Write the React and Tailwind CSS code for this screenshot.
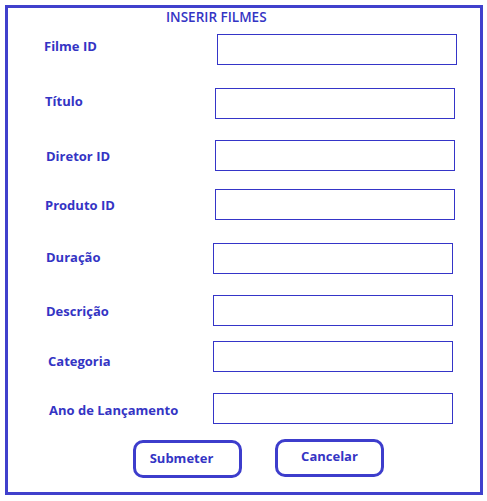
import React from "react";

const campos = [
    { label: "Filme ID", rowClass: "mt-[9px]", labelClass: "pl-[36px] pt-[4px]", inputClass: "ml-[0px]" },
    { label: "Título", rowClass: "mt-[23px]", labelClass: "pl-[37px] pt-[5px]", inputClass: "ml-[-2px]" },
    { label: "Diretor ID", rowClass: "mt-[21px]", labelClass: "pl-[38px] pt-[8px]", inputClass: "ml-[-2px]" },
    { label: "Produto ID", rowClass: "mt-[18px]", labelClass: "pl-[37px] pt-[8px]", inputClass: "ml-[-2px]" },
    { label: "Duração", rowClass: "mt-[23px]", labelClass: "pl-[38px] pt-[6px]", inputClass: "ml-[-4px]" },
    { label: "Descrição", rowClass: "mt-[21px]", labelClass: "pl-[38px] pt-[8px]", inputClass: "ml-[-4px]" },
    { label: "Categoria", rowClass: "mt-[15px]", labelClass: "pl-[40px] pt-[12px]", inputClass: "ml-[-4px]" },
    { label: "Ano de Lançamento", rowClass: "mt-[21px]", labelClass: "pl-[41px] pt-[9px]", inputClass: "ml-[-4px]" },
];

export default function App() {
    return (
        <div className="w-[487px] h-[501px] bg-white pt-[5px] pl-[5px] font-['Open_Sans',sans-serif]">
            <div className="w-[478px] h-[490px] border-[3px] border-[#4040cc]">

                {/* Titulo */}
                <div className="h-[16px] mt-[1px] pl-[158px] text-[13.5px] leading-4 font-semibold text-[#3434c4]">
                    INSERIR FILMES
                </div>

                {/* Campos */}
                {campos.map((c) => (
                    <div key={c.label} className={`flex items-start h-[31px] ${c.rowClass}`}>
                        <div className={`w-[209px] shrink-0 text-[13px] leading-4 font-bold text-[#3434c4] ${c.labelClass}`}>
                            {c.label}
                        </div>
                        <input
                            type="text"
                            className={`w-[240px] h-[31px] border border-[#3535c8] bg-white outline-none ${c.inputClass}`}
                        />
                    </div>
                ))}

                {/* Botoes */}
                <div className="flex mt-[16px] pl-[125px] gap-[33px]">
                    <button className="w-[109px] h-[38px] border-[3px] border-[#3d3dcc] rounded-[10px] text-[13px] font-bold text-[#3434c4] pb-[1px] pr-[12px]">
                        Submeter
                    </button>
                    <button className="w-[109px] h-[38px] -mt-[1px] border-[3px] border-[#3d3dcc] rounded-[10px] text-[13px] font-bold text-[#3434c4] pb-[3px]">
                        Cancelar
                    </button>
                </div>
            </div>
        </div>
    );
}
